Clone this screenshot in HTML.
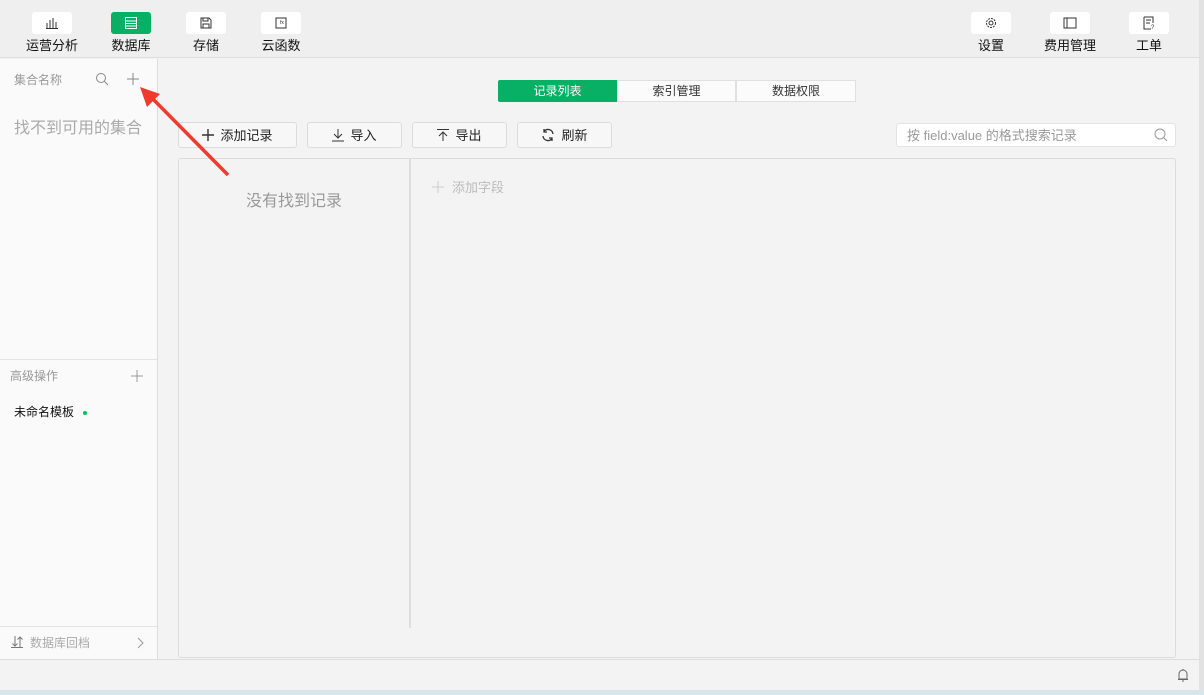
<!DOCTYPE html><html><head><meta charset="utf-8"><style>
*{margin:0;padding:0;box-sizing:border-box}
body{width:1204px;height:695px;overflow:hidden;background:#f3f3f3;font-family:"Liberation Sans","Noto Sans CJK SC",sans-serif;font-size:13px;color:#222;position:relative}
.a{position:absolute}
.top{left:0;top:0;width:1204px;height:58px;background:#efefef;border-bottom:1px solid #ddd}
.nb{position:absolute;top:12px;width:40px;height:22px;background:#fff;border-radius:3px;display:flex;align-items:center;justify-content:center}
.nl{position:absolute;top:35px;font-size:13px;color:#111;text-align:center;width:70px}
.side{left:0;top:59px;width:158px;height:600px;background:#fafafa;border-right:1px solid #ddd}
.btn{position:absolute;top:122px;height:26px;background:#f7f7f7;border:1px solid #dcdcdc;border-radius:3px;display:flex;align-items:center;justify-content:center;gap:6px;font-size:13px;color:#222;line-height:1}
.tab{position:absolute;top:80px;height:22px;width:119px;display:flex;align-items:center;justify-content:center;font-size:12px;background:#fbfbfb;border:1px solid #e0e0e0;color:#333;line-height:1}
</style></head><body>
<div class="a top"></div>
<div class="nb" style="left:32px"><svg width="14" height="12"><path d="M2 11V6M5 11V3M8 11V1M11 11V5M1 11.5H13" stroke="#333" fill="none"/></svg></div>
<div class="nl" style="left:17px">运营分析</div>
<div class="nb" style="left:111px;background:#07b064"><svg width="14" height="12"><rect x="1.5" y="0.5" width="11" height="11" stroke="#fff" fill="none"/><path d="M2 4H12M2 6.5H12M2 9H12" stroke="#fff"/></svg></div>
<div class="nl" style="left:96px">数据库</div>
<div class="nb" style="left:186px"><svg width="12" height="12"><path d="M1 1H9L11 3V11H1Z M3 1V4H8V1 M3 11V7H9V11" stroke="#333" fill="none"/></svg></div>
<div class="nl" style="left:171px">存储</div>
<div class="nb" style="left:261px"><svg width="12" height="12"><path d="M1 1H11V11H1Z" stroke="#333" fill="none"/><text x="5" y="7" font-size="5" fill="#333">fx</text></svg></div>
<div class="nl" style="left:246px">云函数</div>
<div class="nb" style="left:971px"><svg width="14" height="14"><circle cx="7" cy="7" r="4.5" stroke="#333" fill="none" stroke-dasharray="2 1"/><circle cx="7" cy="7" r="2" stroke="#333" fill="none"/></svg></div>
<div class="nl" style="left:956px">设置</div>
<div class="nb" style="left:1050px"><svg width="14" height="12"><path d="M1 1H13V11H1Z M4 1V11" stroke="#333" fill="none"/></svg></div>
<div class="nl" style="left:1035px">费用管理</div>
<div class="nb" style="left:1129px"><svg width="14" height="14"><path d="M2 1H11V7M2 1V13H9M4 4H9M4 7H8" stroke="#333" fill="none"/><text x="9" y="13" font-size="6" fill="#333">?</text></svg></div>
<div class="nl" style="left:1114px">工单</div>

<div class="a side"></div>
<div class="a" style="left:14px;top:71px;font-size:12px;color:#999">集合名称</div>
<svg class="a" style="left:95px;top:72px" width="14" height="14"><circle cx="6" cy="6" r="4.5" stroke="#888" fill="none"/><path d="M9.5 9.5L13 13" stroke="#888"/></svg>
<svg class="a" style="left:126px;top:72px" width="14" height="14"><path d="M7 1V13M1 7H13" stroke="#888"/></svg>
<div class="a" style="left:14px;top:114px;font-size:16px;color:#aaa">找不到可用的集合</div>
<div class="a" style="left:0;top:359px;width:157px;height:1px;background:#e3e3e3"></div>
<div class="a" style="left:10px;top:367px;font-size:12px;color:#999">高级操作</div>
<svg class="a" style="left:130px;top:369px" width="14" height="14"><path d="M7 1V13M1 7H13" stroke="#999"/></svg>
<div class="a" style="left:14px;top:403px;font-size:12px;color:#111">未命名模板</div>
<div class="a" style="left:83px;top:411px;width:4px;height:4px;border-radius:50%;background:#07c160"></div>
<div class="a" style="left:0;top:626px;width:157px;height:1px;background:#e3e3e3"></div>
<svg class="a" style="left:11px;top:636px" width="13" height="12"><path d="M4 0V10M1.5 7.5L4 10L6.5 7.5M9 11V1M6.5 3.5L9 1L11.5 3.5M0 11.5H12" stroke="#777" fill="none"/></svg>
<div class="a" style="left:30px;top:634px;font-size:12px;color:#aaa">数据库回档</div>
<svg class="a" style="left:137px;top:637px" width="8" height="12"><path d="M1 1L6 6L1 11" stroke="#999" fill="none"/></svg>

<div class="tab" style="left:498px;background:#07b064;color:#fff;border-color:#07b064;border-radius:2px 0 0 2px">记录列表</div>
<div class="tab" style="left:617px">索引管理</div>
<div class="tab" style="left:736px;width:120px">数据权限</div>

<div class="btn" style="left:178px;width:119px"><svg width="12" height="12"><path d="M6 0V12M0 6H12" stroke="#333" stroke-width="1.4"/></svg>添加记录</div>
<div class="btn" style="left:307px;width:95px"><svg width="12" height="13"><path d="M6 0V9M2 5L6 9L10 5M0 12H12" stroke="#333" fill="none"/></svg>导入</div>
<div class="btn" style="left:412px;width:95px"><svg width="12" height="13"><path d="M6 12V3M2 7L6 3L10 7M0 0.5H12" stroke="#333" fill="none"/></svg>导出</div>
<div class="btn" style="left:517px;width:95px"><svg width="14" height="14"><path d="M12 6A5 5 0 0 0 3 3.5M2 8A5 5 0 0 0 11 10.5M3 1V4H6M11 13V10H8" stroke="#333" fill="none" stroke-width="1.3"/></svg>刷新</div>
<div class="a" style="left:896px;top:123px;width:280px;height:24px;background:#fff;border:1px solid #e3e3e3;border-radius:3px"></div>
<div class="a" style="left:907px;top:125px;font-size:13px;color:#999">按 field:value 的格式搜索记录</div>
<svg class="a" style="left:1154px;top:128px" width="14" height="14"><circle cx="6" cy="6" r="5" stroke="#999" fill="none"/><path d="M9.5 9.5L13 13" stroke="#999"/></svg>

<div class="a" style="left:178px;top:158px;width:998px;height:500px;border:1px solid #dcdcdc;border-radius:3px;background:#f3f3f3"></div>
<div class="a" style="left:409px;top:159px;width:2px;height:469px;background:#ddd"></div>
<div class="a" style="left:246px;top:187px;font-size:16px;color:#999">没有找到记录</div>
<svg class="a" style="left:432px;top:181px" width="12" height="12"><path d="M6 0V12M0 6H12" stroke="#ccc"/></svg>
<div class="a" style="left:452px;top:177px;font-size:13px;color:#bbb">添加字段</div>

<div class="a" style="left:158px;top:659px;width:1046px;height:1px;background:#ddd"></div>
<div class="a" style="left:0;top:659px;width:158px;height:1px;background:#ddd"></div>
<svg class="a" style="left:1177px;top:668px" width="12" height="14"><path d="M6 1V2M2 11V6A4 4 0 0 1 10 6V11ZM1 11.5H11M5 13H7" stroke="#666" fill="none"/></svg>
<div class="a" style="left:0;top:690px;width:1204px;height:5px;background:#d6e6ea"></div>
<div class="a" style="left:1199px;top:0;width:5px;height:690px;background:#e2e2e2"></div>

<svg class="a" style="left:130px;top:80px" width="110" height="110"><path d="M98 95L18 14" stroke="#f03a2e" stroke-width="3.5"/><path d="M10 7L30 14L17 27Z" fill="#f03a2e"/></svg>
</body></html>
